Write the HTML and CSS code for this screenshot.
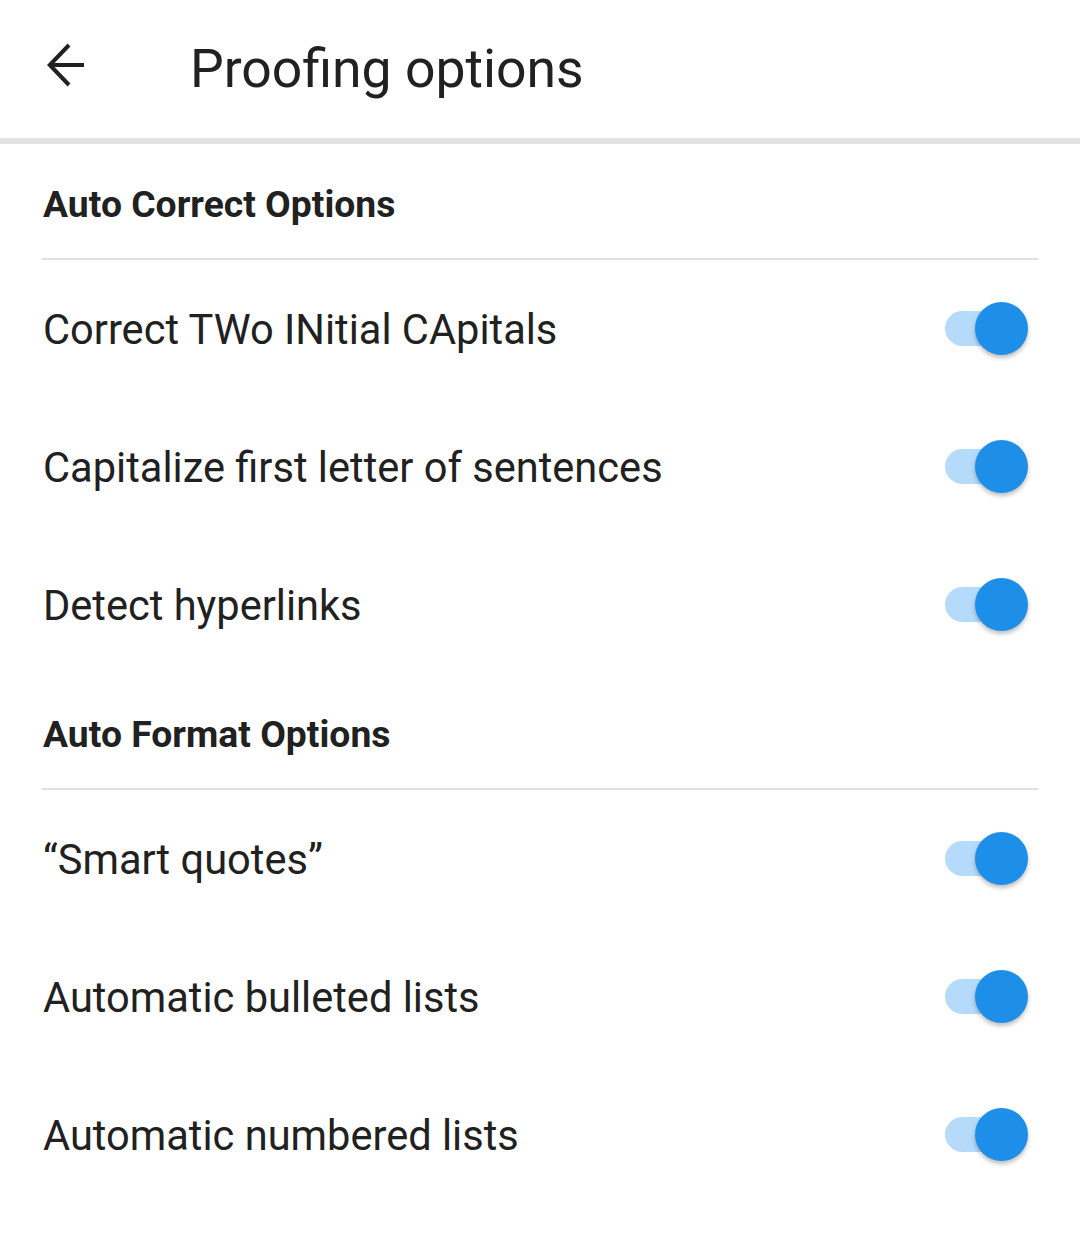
FILE: index.html
```html
<!DOCTYPE html>
<html>
<head lang="en">
    <meta charset="UTF-8">
    <title>Proofing options</title>
    <link rel="stylesheet" href="styles.css">
</head>
<body>
<div class="page">
    <div class="topbar">
        <div class="back">
            <svg width="44" height="48" viewBox="0 0 44 48">
                <path d="M4 24H39M24 4L4.8 24L24 44" fill="none" stroke="#212121" stroke-width="4"/>
            </svg>
        </div>
        <h1 class="title">Proofing options</h1>
    </div>
    <div class="list">
        <div class="group">Auto Correct Options</div>
        <div class="row">
            <span>Correct TWo INitial CApitals</span>
            <span class="switch"><i class="track"></i><i class="thumb"></i></span>
        </div>
        <div class="row">
            <span>Capitalize first letter of sentences</span>
            <span class="switch"><i class="track"></i><i class="thumb"></i></span>
        </div>
        <div class="row">
            <span>Detect hyperlinks</span>
            <span class="switch"><i class="track"></i><i class="thumb"></i></span>
        </div>
        <div class="group">Auto Format Options</div>
        <div class="row">
            <span>“Smart quotes”</span>
            <span class="switch"><i class="track"></i><i class="thumb"></i></span>
        </div>
        <div class="row">
            <span>Automatic bulleted lists</span>
            <span class="switch"><i class="track"></i><i class="thumb"></i></span>
        </div>
        <div class="row">
            <span>Automatic numbered lists</span>
            <span class="switch"><i class="track"></i><i class="thumb"></i></span>
        </div>
    </div>
</div>
</body>
</html>
```

FILE: styles.css
```css
* {
    margin: 0;
    padding: 0;
    box-sizing: border-box;
}

body {
    background-color: #fff;
    font-family: Roboto, "Noto Sans", sans-serif;
    color: #212121;
}

.page {
    width: 1080px;
}

.topbar {
    height: 144px;
    display: flex;
    align-items: center;
    border-bottom: 6px solid #e3e3e3;
    padding-bottom: 8px;
}

.back {
    width: 190px;
    padding-left: 45px;
    display: flex;
    align-items: center;
}

.back svg {
    display: block;
}

.title {
    font-size: 53.5px;
    font-weight: 400;
    padding-top: 6px;
}

.list {
    padding: 0 42px;
}

.group {
    height: 116px;
    display: flex;
    align-items: center;
    border-bottom: 2px solid #e0e0e0;
    padding-left: 1px;
    padding-top: 6px;
    font-size: 37.3px;
    font-weight: 700;
}

.row {
    height: 138px;
    display: flex;
    align-items: center;
    justify-content: space-between;
    padding-left: 1px;
    padding-right: 10px;
    font-size: 41.6px;
}

.switch {
    position: relative;
    width: 83px;
    height: 54px;
    margin-top: -3px;
}

.switch i {
    position: absolute;
    display: block;
}

.track {
    left: 0;
    top: 10px;
    width: 74px;
    height: 35px;
    border-radius: 18px;
    background-color: #b6dafa;
}

.thumb {
    right: 0;
    top: 1px;
    width: 53px;
    height: 53px;
    border-radius: 50%;
    background-color: #1e8fe9;
    box-shadow: 0 3px 4px rgba(0, 0, 0, 0.25);
}
```
